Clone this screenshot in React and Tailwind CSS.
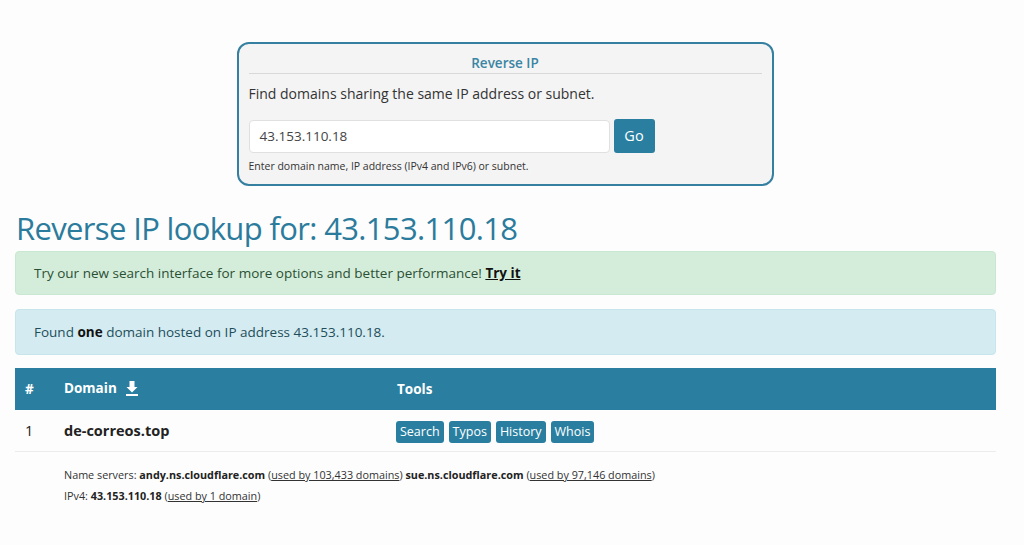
import React from 'react';

const font = { fontFamily: '"Open Sans", "Noto Sans", "Liberation Sans", sans-serif' };

function ToolButton({ children }) {
  return (
    <span className="rounded-[3px] bg-[#2a7fa0] px-[4px] py-[2px] text-[12.5px] leading-[18px] text-white">
      {children}
    </span>
  );
}

export default function App() {
  return (
    <div className="min-h-[545px] bg-[#fdfdfd] text-[#333]" style={font}>
      <div className="flex justify-center pr-[14px] pt-[42px]">
        <div className="w-[537px] rounded-[12px] border-2 border-[#357fa0] bg-[#f4f4f4] px-[10px] pb-[10px] pt-[10px]">
          <div className="border-b border-[#d8d8d8] pb-[1px] text-center text-[13.5px] font-semibold leading-[18px] text-[#3a85a3]">
            Reverse IP
          </div>
          <p className="mt-[10px] text-[14px] leading-[20px] text-[#333]">
            Find domains sharing the same IP address or subnet.
          </p>
          <div className="mt-[15px] flex items-center gap-[4px]">
            <div className="flex h-[33px] w-[361px] items-center rounded-[4px] border border-[#e0e0e0] bg-white px-[10px] text-[13.5px] text-[#444]">
              43.153.110.18
            </div>
            <div className="flex h-[34px] w-[41px] items-center justify-center rounded-[3px] bg-[#2a7fa0] text-[14.5px] text-white">
              Go
            </div>
          </div>
          <p className="mt-[6px] text-[10.5px] leading-[15px] text-[#333]">
            Enter domain name, IP address (IPv4 and IPv6) or subnet.
          </p>
        </div>
      </div>

      <div className="px-[15px]">
        <h1 className="ml-[1px] mt-[21px] text-[31px] font-normal leading-[42px] tracking-[-0.65px] text-[#2b7b9c]">
          Reverse IP lookup for: 43.153.110.18
        </h1>

        <div className="mt-[2px] w-[981px] rounded-[4px] border border-[#c9e8d1] bg-[#d4edda] px-[18px] py-[11px] text-[13.5px] leading-[20px] text-[#2b4f33]">
          Try our new search interface for more options and better performance!{' '}
          <span className="font-bold text-[#111] underline">Try it</span>
        </div>

        <div className="mt-[14px] w-[981px] rounded-[4px] border border-[#c6e6ec] bg-[#d3ebf1] px-[18px] py-[12px] text-[13.5px] leading-[20px] text-[#1e4e5a]">
          Found <span className="font-bold text-[#111]">one</span> domain hosted on IP address 43.153.110.18.
        </div>

        <div className="mt-[13px] w-[981px]">
          <div className="flex h-[42px] items-center bg-[#2a7fa0] text-[13.5px] font-bold text-white">
            <div className="w-[49px] pl-[10px]">#</div>
            <div className="flex w-[333px] items-center gap-[8px] self-start pt-[10px]">
              Domain
              <svg width="14" height="16" viewBox="0 0 14 16" fill="white">
                <path d="M4.5 1h5v6h3L7 12.5 1.5 7h3z" />
                <rect x="1" y="14" width="12" height="2" />
              </svg>
            </div>
            <div>Tools</div>
          </div>
          <div className="flex h-[42px] items-center border-b border-[#ececec] text-[14.5px]">
            <div className="w-[49px] pl-[10px] text-[#222]">1</div>
            <div className="w-[332px] font-bold text-[#222]">de-correos.top</div>
            <div className="flex gap-[5px] pt-[2px]">
              <ToolButton>Search</ToolButton>
              <ToolButton>Typos</ToolButton>
              <ToolButton>History</ToolButton>
              <ToolButton>Whois</ToolButton>
            </div>
          </div>
          <div className="pl-[49px] pt-[12px] text-[10.8px] leading-[21px] text-[#333]">
            <div>
              Name servers: <span className="font-bold text-[#222]">andy.ns.cloudflare.com</span>{' '}
              (<span className="underline">used by 103,433 domains</span>){' '}
              <span className="font-bold text-[#222]">sue.ns.cloudflare.com</span>{' '}
              (<span className="underline">used by 97,146 domains</span>)
            </div>
            <div>
              IPv4: <span className="font-bold text-[#222]">43.153.110.18</span>{' '}
              (<span className="underline">used by 1 domain</span>)
            </div>
          </div>
        </div>
      </div>
    </div>
  );
}
